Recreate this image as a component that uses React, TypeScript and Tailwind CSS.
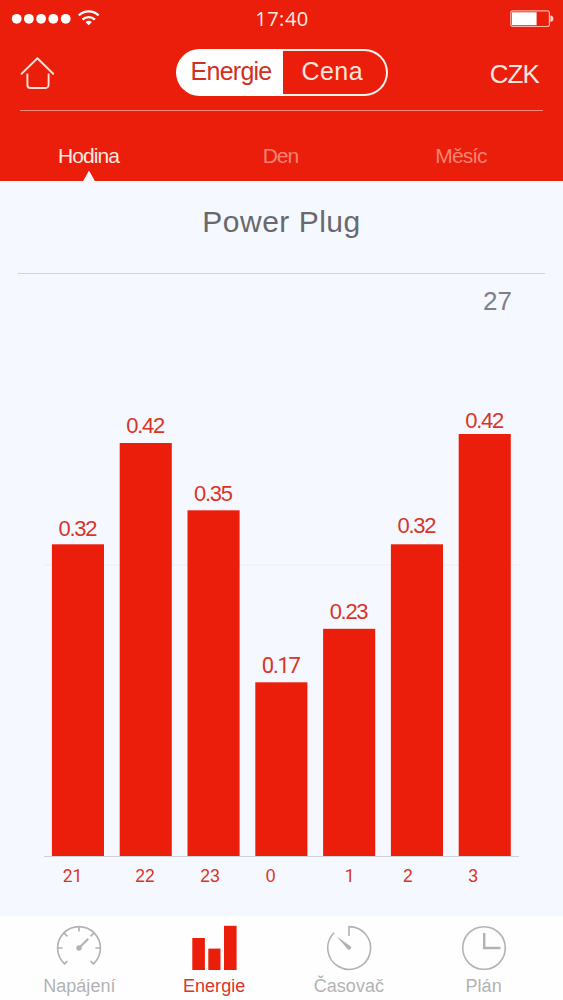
const RED = "#eb1e0c";

// the tops follow the heights of the bars in px, labels sit slightly above them
const bars = [
  { value: "0.32", top: 544.3, labelY: 536, hour: "21", hourX: 72.5 },
  { value: "0.42", top: 443, labelY: 433.3, hour: "22", hourX: 145 },
  { value: "0.35", top: 510.3, labelY: 500.7, hour: "23", hourX: 210 },
  { value: "0.17", top: 682.3, labelY: 673.3, hour: "0", hourX: 270.7 },
  { value: "0.23", top: 628.8, labelY: 618.7, hour: "1", hourX: 349.7 },
  { value: "0.32", top: 544.3, labelY: 533, hour: "2", hourX: 407.8 },
  { value: "0.42", top: 434, labelY: 427.5, hour: "3", hourX: 473 },
];

const CHART_TOP = 330;
const BASELINE = 856;

// Liberation draws the digit 1 with a foot, Roboto does not
function digitFont(text: string) {
  return text.includes("1") ? "font-[Roboto,sans-serif]" : "";
}

function StatusBar() {
  return (
    <div className="flex h-[37px] items-center pl-[10px] pr-[9px]">
      <div className="flex-1">
        <svg width="92" height="20" viewBox="0 0 92 20" className="ml-px text-white">
          {[5.7, 17.9, 30.1, 42.3, 54.7].map((x) => (
            <circle key={x} cx={x} cy="9.8" r="4.9" fill="currentColor" />
          ))}
          <g fill="none" stroke="currentColor" strokeWidth="2.4">
            <path d="M67.8 6.4a14.3 14.3 0 0 1 19.8 0" />
            <path d="M71.5 10.6a9 9 0 0 1 12.4 0" />
          </g>
          <path d="M77.7 16.2 74.5 13.1a4.8 4.8 0 0 1 6.4 0Z" fill="currentColor" />
        </svg>
      </div>
      <span className="font-['Open_Sans',sans-serif] text-[20px] leading-[36px] tracking-[0.5px] text-[#ffe9e2]">
        17:40
      </span>
      <div className="flex flex-1 justify-end">
        <svg width="44" height="18" viewBox="0 0 44 18">
          <rect x="0.8" y="0.9" width="38.6" height="15.6" rx="2" fill="none" stroke="#ffb3a6" strokeWidth="1.2" />
          <rect x="2" y="2.3" width="24.6" height="12.9" fill="#fff" />
          <path d="M40.4 5.5q3 .4 3 3.2t-3 3.2Z" fill="#ffd9d0" />
        </svg>
      </div>
    </div>
  );
}

function TopBar() {
  return (
    <div className="mx-[20px] flex h-[74px] items-start justify-between border-b border-[#f98b7c] pt-[12px]">
      <svg width="36" height="34" viewBox="0 0 36 34" fill="none" stroke="#ffdfd6" strokeWidth="1.9" className="mt-[7px]">
        <path d="M1.6 17.8 17.4 2.3 33.2 17.8" strokeLinejoin="round" strokeLinecap="round" />
        <path d="M7.4 17.4V29a3 3 0 0 0 3 3H25.6a3 3 0 0 0 3-3V17.4" />
      </svg>
      <div className="ml-[18px] flex h-[46.5px] w-[211.5px] text-[25px]">
        <button className="w-[107px] rounded-l-full bg-white pb-[3px] pl-[14.5px] text-left leading-[42px] tracking-[-0.75px] text-[#d2301f]">
          Energie
        </button>
        <button className="flex-1 rounded-r-full border-2 border-l-0 border-[#fff1ed] pb-px pl-[18.5px] text-left leading-[41px] tracking-[0.4px] text-[#ffe3da]">
          Cena
        </button>
      </div>
      <span className="mr-[4px] text-[26px] leading-[50px] tracking-[-0.9px] text-[#ffe6de]">CZK</span>
    </div>
  );
}

function RangeTabs() {
  return (
    <div className="relative flex h-[69.5px] text-[21px] leading-[89px] tracking-[-0.95px]">
      <span className="w-[177px] text-center text-[#ffe9e2]">Hodina</span>
      <span className="w-[207px] text-center text-[#fa8272]">Den</span>
      <span className="w-[154px] text-center text-[#fa8272]">Měsíc</span>
      <svg width="14" height="12" viewBox="0 0 14 12" className="absolute bottom-[-1px] left-[82px]">
        <path d="M7 0.5 13.4 12H0.6Z" fill="#fbfbff" />
      </svg>
    </div>
  );
}

function Chart() {
  return (
    <svg width="563" height="586" viewBox={`0 ${CHART_TOP} 563 586`} className="block">
      <line x1="44" x2="519" y1="565" y2="565" stroke="#ebedf2" strokeWidth="1.2" />
      <line x1="44" x2="519" y1="856.5" y2="856.5" stroke="#cfd1d6" strokeWidth="1.2" />
      {bars.map((bar, i) => {
        const x = 51.9 + i * 67.8;
        return (
          <g key={bar.hour}>
            <rect x={x} y={bar.top} width="52.1" height={BASELINE - bar.top} fill={RED} />
            <text
              x={x + 25.4}
              y={bar.labelY}
              textAnchor="middle"
              className={`fill-[#d93527] text-[22px] tracking-[-1.3px] ${digitFont(bar.value)}`}
            >
              {bar.value}
            </text>
            <text
              x={bar.hourX}
              y={882}
              textAnchor="middle"
              className={`fill-[#d93527] text-[17.5px] ${digitFont(bar.hour)}`}
            >
              {bar.hour}
            </text>
          </g>
        );
      })}
    </svg>
  );
}

function GaugeIcon() {
  return (
    <svg width="46" height="46" viewBox="0 0 46 46" fill="none" stroke="currentColor" strokeWidth="1.7">
      <path d="M11.4 36.2 8.6 38.9A21.4 21.4 0 1 1 37.4 38.9L34.6 36.2" />
      <path d="M23 1.6V6.6M1.6 23H6.6M39.4 23H44.4M7.9 7.9 11.4 11.4M38.1 7.9 34.6 11.4" />
      <path d="M23 23 32.3 13.8" strokeWidth="2" />
      <circle cx="23" cy="23" r="2.7" fill="currentColor" stroke="none" />
    </svg>
  );
}

function BarsIcon() {
  return (
    <svg width="46" height="46" viewBox="0 0 46 46" fill={RED}>
      <rect x="1.3" y="13" width="12.6" height="32" />
      <rect x="17.3" y="23.6" width="12.2" height="21.4" />
      <rect x="33" y="0.8" width="12.6" height="44.2" />
    </svg>
  );
}

function TimerIcon() {
  return (
    <svg width="46" height="46" viewBox="0 0 46 46" fill="none" stroke="currentColor" strokeWidth="1.6">
      <path d="M23 11V1.6A21.4 21.4 0 1 1 8.1 7.8" />
      <path d="M10.5 11.2 24.8 21.4A2.1 2.1 0 0 1 22 24.4Z" fill="currentColor" stroke="none" />
    </svg>
  );
}

function ClockIcon() {
  return (
    <svg width="46" height="46" viewBox="0 0 46 46" fill="none" stroke="currentColor" strokeWidth="1.6">
      <circle cx="23" cy="23" r="21.3" />
      <path d="M23.2 8V23H39.4" strokeWidth="2.4" />
    </svg>
  );
}

const navItems = [
  { label: "Napájení", Icon: GaugeIcon, active: false },
  { label: "Energie", Icon: BarsIcon, active: true },
  { label: "Časovač", Icon: TimerIcon, active: false },
  { label: "Plán", Icon: ClockIcon, active: false },
];

function BottomNav() {
  return (
    <nav className="flex h-[84px] bg-[#fefeff] px-[12px] pt-[9px]">
      {navItems.map(({ label, Icon, active }) => (
        <div
          key={label}
          className={`flex flex-1 flex-col items-center ${active ? "text-[#dd3426]" : "text-[#b2b2b4]"}`}
        >
          <Icon />
          <span className="mt-[5px] text-[18px] leading-[21px] tracking-[0.05px]">{label}</span>
        </div>
      ))}
    </nav>
  );
}

export default function App() {
  return (
    <div className="h-[1000px] w-[563px] overflow-hidden bg-[#f6f8ff] font-['Liberation_Sans',Arial,sans-serif]">
      <header className="bg-[#eb1e0c]">
        <StatusBar />
        <TopBar />
        <RangeTabs />
      </header>
      <div className="mx-[18px] flex h-[93px] justify-center border-b border-[#d0d1de]">
        <h1 className="text-[30px] leading-[82px] tracking-[0.5px] text-[#68696e]">Power Plug</h1>
      </div>
      <div className="flex h-[56.5px] justify-end pr-[51px] text-[26px] leading-[55px] text-[#7f8086]">27</div>
      <Chart />
      <BottomNav />
    </div>
  );
}
